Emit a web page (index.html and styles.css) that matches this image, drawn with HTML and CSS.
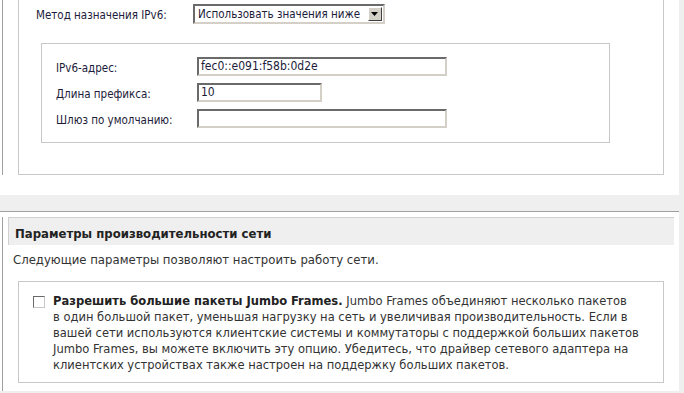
FILE: index.html
```html
<!doctype html>
<html lang="ru">
<head>
<meta charset="utf-8">
<title>Сеть</title>
<link rel="stylesheet" href="styles.css">
</head>
<body>
	<div class="section">
		<div class="frame">
			<div class="box">
				<div class="row toprow">
					<span class="label wide">Метод назначения IPv6:</span>
					<div class="select">
						<span class="select-text">Использовать значения ниже</span>
						<span class="select-btn"><svg width="8" height="4" viewBox="0 0 8 4"><path d="M0 0h7l-3.5 4z" fill="#000"/></svg></span>
					</div>
				</div>
				<div class="subbox">
					<div class="row">
						<span class="label">IPv6-адрес:</span>
						<div class="input long">fec0::e091:f58b:0d2e</div>
					</div>
					<div class="row">
						<span class="label">Длина префикса:</span>
						<div class="input short">10</div>
					</div>
					<div class="row">
						<span class="label">Шлюз по умолчанию:</span>
						<div class="input long"></div>
					</div>
				</div>
			</div>
		</div>
	</div>

	<div class="section lower">
		<div class="frame">
			<div class="head">Параметры производительности сети</div>
			<p class="desc">Следующие параметры позволяют настроить работу сети.</p>
			<div class="box optbox">
				<span class="check"></span>
				<p class="opt"><b>Разрешить большие пакеты Jumbo Frames.</b> Jumbo Frames объединяют несколько пакетов в&nbsp;один большой пакет, уменьшая нагрузку на сеть и увеличивая производительность. Если в вашей сети используются клиентские системы и коммутаторы с поддержкой больших пакетов Jumbo Frames, вы можете включить эту опцию. Убедитесь, что драйвер сетевого адаптера на клиентских устройствах также настроен на поддержку больших пакетов.</p>
			</div>
		</div>
	</div>
</body>
</html>
```

FILE: styles.css
```css
body, html {
	margin: 0;
}
body {
	background: #efefef;
	font-family: "DejaVu Sans Condensed", "DejaVu Sans", sans-serif;
	color: #222;
}

/* sections! */
.section {
	width: 677px;
	padding-left: 2px;
	background: #fff;
	padding-bottom: 20px;
}
.frame {
	border-left: 1px solid #a0a0a0;
}
.lower {
	margin-top: 16px;
	border-top: 1px solid #a0a0a0;
	padding-bottom: 0;
	height: 179px;
	overflow: hidden;
}
.lower .frame {
	height: 100%;
}

/* boxes */
.box {
	margin-left: 15px;
	width: 644px;
	border: 1px solid #c8c8c8;
	border-top: 0;
	padding: 0 0 31px 0;
}
.subbox {
	margin: 19px 0 0 22px;
	width: 539px;
	border: 1px solid #c8c8c8;
	padding: 13px 14px 14px 14px;
	display: flex;
	flex-direction: column;
	gap: 7px;
}

/* form rows */
.row {
	display: flex;
	align-items: center;
	font-size: 11.5px;
	color: #1c1c3a;
}
.row .label {
	padding-top: 2px;
}
.toprow {
	padding: 4px 0 0 17px;
}
.label {
	width: 141px;
}
.label.wide {
	width: 157px;
}
.select {
	width: 188px;
	height: 16px;
	border: 2px solid;
	border-color: #6a6a6a #d4d0c8 #d4d0c8 #6a6a6a;
	display: flex;
	align-items: center;
	justify-content: space-between;
	color: #1c1c3a;
}
.select-text {
	padding-left: 3px;
	font-size: 11.5px;
	white-space: nowrap;
}
.select-btn {
	width: 14px;
	height: 14px;
	margin-right: 1px;
	background: #d4d0c8;
	border: 1px solid;
	border-color: #fff #404040 #404040 #fff;
	box-sizing: border-box;
	display: flex;
	align-items: center;
	justify-content: center;
}
.input {
	height: 15px;
	border: 2px solid;
	border-color: #6a6a6a #d4d0c8 #d4d0c8 #6a6a6a;
	padding-left: 2px;
	line-height: 15px;
	font-size: 12px;
	color: #1c1c3a;
}
.input.long {
	width: 244px;
}
.input.short {
	width: 119px;
}

/* performance block */
.head {
	margin: 5px 0 0 5px;
	width: 659px;
	height: 25px;
	line-height: 27px;
	padding: 2px 0 0 6px;
	background: #efefef;
	border-top: 1px solid #d0d0d0;
	border-left: 1px solid #d0d0d0;
	font-size: 13px;
	font-weight: bold;
	color: #222;
}
.desc {
	margin: 6px 0 0 10px;
	font-size: 13px;
	line-height: 17px;
	color: #333;
}
.optbox {
	margin-top: 13px;
	border-top: 1px solid #c8c8c8;
	padding: 11px 0 9px 14px;
	width: 630px;
	display: flex;
	align-items: flex-start;
	gap: 8px;
}
.check {
	flex: none;
	width: 12px;
	height: 12px;
	margin-top: 3px;
	box-sizing: border-box;
	border: 1px solid;
	border-color: #6a6a6a #c8c8c8 #c8c8c8 #6a6a6a;
	background: #fff;
}
.opt {
	margin: 0;
	flex: 1;
	font-size: 12.8px;
	line-height: 16px;
	color: #333;
}
.opt b {
	color: #222;
}
```
